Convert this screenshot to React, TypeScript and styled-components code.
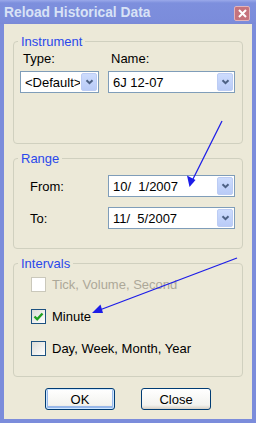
import styled, { createGlobalStyle } from 'styled-components'

const Global = createGlobalStyle`
html, body {
  margin: 0;
  padding: 0;
  background: #ece9d8;
}
body {
  font-family: "Liberation Sans", Arial, sans-serif;
  font-size: 13px;
}
`

const Chevron = () => (
    <svg width="9" height="6" viewBox="0 0 9 6">
        <path d="M1.5 1.2 L4.5 4.2 L7.5 1.2" fill="none" stroke="#4d6185" strokeWidth="2" />
    </svg>
)

const Combo = ({ value }: { value: string }) => (
    <ComboBox>
        <ComboText>{value}</ComboText>
        <DropBtn>
            <Chevron />
        </DropBtn>
    </ComboBox>
)

const Check = ({ checked, disabled, label }: { checked?: boolean; disabled?: boolean; label: string }) => (
    <CheckRow $disabled={disabled}>
        <Box $disabled={disabled}>
            {checked && (
                <svg width="11" height="11" viewBox="0 0 11 11">
                    <path d="M1.5 5.5 L4.2 8.3 L9.5 2.5" fill="none" stroke="#21a121" strokeWidth="2.4" />
                </svg>
            )}
        </Box>
        {label}
    </CheckRow>
)

const App = () => {
    return (
        <>
            <Global />
            <Window>
                <TitleBar>
                    <Title>Reload Historical Data</Title>
                    <CloseBtn>
                        <svg width="9" height="9" viewBox="0 0 9 9">
                            <path d="M1 1 L8 8 M8 1 L1 8" stroke="#fff" strokeWidth="2" />
                        </svg>
                    </CloseBtn>
                </TitleBar>
                <Body>
                    <Group $h={110}>
                        <Legend>Instrument</Legend>
                        <InstrumentGrid>
                            <TopLabel>Type:</TopLabel>
                            <TopLabel>Name:</TopLabel>
                            <Combo value="<Default>" />
                            <Combo value="6J 12-07" />
                        </InstrumentGrid>
                    </Group>
                    <Group $h={98}>
                        <Legend>Range</Legend>
                        <RangeGrid>
                            <Label>From:</Label>
                            <Combo value="10/  1/2007" />
                            <Label>To:</Label>
                            <Combo value="11/  5/2007" />
                        </RangeGrid>
                    </Group>
                    <Group $h={121}>
                        <Legend>Intervals</Legend>
                        <CheckList>
                            <Check disabled label="Tick, Volume, Second" />
                            <Check checked label="Minute" />
                            <Check label="Day, Week, Month, Year" />
                        </CheckList>
                    </Group>
                    <Buttons>
                        <Button $default>OK</Button>
                        <Button>Close</Button>
                    </Buttons>
                </Body>
                <Arrows width="256" height="423" viewBox="0 0 256 423">
                    <line x1="222" y1="121" x2="191" y2="183" stroke="#1c1ce8" strokeWidth="1.3" />
                    <path d="M189.5 187 L187 175.5 L195.5 180 Z" fill="#1c1ce8" />
                    <line x1="237" y1="258" x2="97" y2="311" stroke="#1c1ce8" strokeWidth="1.3" />
                    <path d="M92 313 L100.5 304.5 L103 313 Z" fill="#1c1ce8" />
                </Arrows>
            </Window>
        </>
    )
}

export default App

const Window = styled.div`
position: relative;
width: 256px;
height: 423px;
box-sizing: border-box;
background: #ece9d8;
border: 4px solid #7b8cdb;
border-top: none;
display: flex;
flex-direction: column;
`

const TitleBar = styled.div`
height: 24px;
margin: 0 -4px;
padding: 0 6px 0 4px;
display: flex;
align-items: center;
justify-content: space-between;
background: linear-gradient(#9aa9ea 0, #7d8fdd 3px, #7b8cdb 90%, #7a89d6);
`

const Title = styled.div`
font-weight: bold;
font-size: 13.8px;
color: #d8e2f6;
padding-top: 1px;
`

const CloseBtn = styled.div`
width: 16px;
height: 15px;
box-sizing: border-box;
border: 1px solid #e2b4bb;
border-radius: 2px;
background: #c5737d;
display: flex;
align-items: center;
justify-content: center;
margin-top: 3px;
`

const Body = styled.div`
flex: 1;
padding: 10px 9px 0;
display: flex;
flex-direction: column;
gap: 7px;
`

const Group = styled.fieldset<{ $h: number }>`
margin: 0;
padding: 0;
min-inline-size: 0;
height: ${p => p.$h}px;
box-sizing: border-box;
border: 1px solid #d0d0bf;
border-radius: 4px;
`

const Legend = styled.legend`
margin-left: 4px;
padding: 0 3px;
color: #2a48eb;
font-size: 13px;
line-height: 15px;
`

const InstrumentGrid = styled.div`
display: grid;
grid-template-columns: 79px 127px;
column-gap: 9px;
row-gap: 5px;
padding: 2px 0 0 6px;
`

const TopLabel = styled.div`
padding-left: 3px;
line-height: 15px;
color: #000;
`

const RangeGrid = styled.div`
display: grid;
grid-template-columns: 78px 127px;
row-gap: 10px;
padding: 9px 0 0 16px;
align-items: center;
`

const Label = styled.div`
color: #000;
`

const ComboBox = styled.div`
height: 22px;
box-sizing: border-box;
border: 1px solid #7f9db9;
background: #fff;
display: flex;
align-items: center;
`

const ComboText = styled.div`
flex: 1;
overflow: hidden;
white-space: pre;
padding-left: 4px;
color: #000;
`

const DropBtn = styled.div`
width: 16px;
height: 18px;
margin: 0 1px;
box-sizing: border-box;
border: 1px solid #bcccf4;
border-radius: 2px;
background: linear-gradient(#cddcfd, #b9cbf7);
display: flex;
align-items: center;
justify-content: center;
`

const CheckList = styled.div`
display: flex;
flex-direction: column;
gap: 17px;
padding: 6px 0 0 17px;
`

const CheckRow = styled.div<{ $disabled?: boolean }>`
display: flex;
align-items: center;
gap: 6px;
height: 15px;
color: ${p => (p.$disabled ? '#aca899' : '#000')};
`

const Box = styled.div<{ $disabled?: boolean }>`
width: 15px;
height: 15px;
box-sizing: border-box;
border: 1px solid ${p => (p.$disabled ? '#cac8bb' : '#1c5180')};
background: ${p => (p.$disabled ? '#fff' : 'linear-gradient(135deg, #dcdcd7, #fff)')};
display: flex;
align-items: center;
justify-content: center;
`

const Buttons = styled.div`
display: flex;
justify-content: center;
gap: 26px;
margin-top: 4px;
`

const Button = styled.div<{ $default?: boolean }>`
width: 70px;
height: 22px;
box-sizing: border-box;
border: 1px solid #003c74;
border-radius: 3px;
background: linear-gradient(#fff, #f3f3ef 80%, #d6d0c5);
box-shadow: ${p => (p.$default ? 'inset 0 0 0 1px #cee7ff, inset 0 -1px 0 2px #98b8ea' : 'none')};
display: flex;
align-items: center;
justify-content: center;
color: #000;
`

const Arrows = styled.svg`
position: absolute;
left: -4px;
top: 0;
pointer-events: none;
`
